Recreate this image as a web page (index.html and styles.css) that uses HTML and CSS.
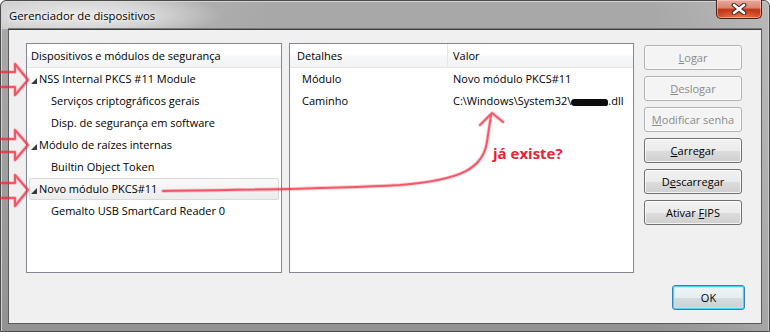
FILE: index.html
```html
<!DOCTYPE html>
<html lang="pt-BR">
<head>
<meta charset="utf-8">
<title>Gerenciador de dispositivos</title>
<link rel="stylesheet" href="styles.css">
</head>
<body>
<div class="window">
  <div class="titlebar">
    <span class="title">Gerenciador de dispositivos</span>
    <div class="close">
      <svg width="16" height="12" viewBox="0 0 16 12">
        <path d="M3,2 L13,10 M13,2 L3,10" stroke="#3a2620" stroke-width="4.6" stroke-linecap="round"/>
        <path d="M3,2 L13,10 M13,2 L3,10" stroke="#ffffff" stroke-width="2.6" stroke-linecap="round"/>
      </svg>
    </div>
  </div>
  <div class="client">
    <div class="main">
      <div class="pane tree">
        <div class="head">Dispositivos e módulos de segurança</div>
        <div class="row top"><span class="twisty"></span>NSS Internal PKCS #11 Module</div>
        <div class="row child">Serviços criptográficos gerais</div>
        <div class="row child">Disp. de segurança em software</div>
        <div class="row top"><span class="twisty"></span>Módulo de raízes internas</div>
        <div class="row child">Builtin Object Token</div>
        <div class="row top hot"><span class="twisty"></span>Novo módulo PKCS#11</div>
        <div class="row child">Gemalto USB SmartCard Reader 0</div>
      </div>
      <div class="pane details">
        <div class="dhead">
          <div class="hcell first">Detalhes</div>
          <div class="hcell">Valor</div>
        </div>
        <div class="drow">
          <div class="cell first">Módulo</div>
          <div class="cell">Novo módulo PKCS#11</div>
        </div>
        <div class="drow">
          <div class="cell first">Caminho</div>
          <div class="cell">C:\Windows\System32\<span class="blot"></span>.dll</div>
        </div>
      </div>
      <div class="buttons">
        <button class="btn" disabled><u>L</u>ogar</button>
        <button class="btn" disabled><u>D</u>eslogar</button>
        <button class="btn" disabled><u>M</u>odificar senha</button>
        <button class="btn"><u>C</u>arregar</button>
        <button class="btn">D<u>e</u>scarregar</button>
        <button class="btn">Ativar <u>F</u>IPS</button>
      </div>
    </div>
    <div class="footer">
      <button class="btn ok">OK</button>
    </div>
  </div>
  <svg class="annot" width="770" height="332" viewBox="0 0 770 332">
    <g fill="none" stroke="#f0283c" stroke-linejoin="round" stroke-linecap="round">
      <g stroke-width="3.8" opacity="0.22">
        <path d="M1,72 L15,72 L15,64 L28,80 L15,95 L15,87 L1,87"/>
        <path d="M1,139 L15,139 L15,130 L28,145 L15,160 L15,152 L1,152"/>
        <path d="M1,183 L15,183 L15,175 L28,190 L15,206 L15,198 L1,198"/>
        <path d="M163,191 C240,190 330,189 400,185 C462,180 483,168 487,142 L491,115"/>
        <path d="M480,125 L492,113 L503,122"/>
      </g>
      <g stroke-width="2" opacity="0.7">
        <path d="M1,72 L15,72 L15,64 L28,80 L15,95 L15,87 L1,87"/>
        <path d="M1,139 L15,139 L15,130 L28,145 L15,160 L15,152 L1,152"/>
        <path d="M1,183 L15,183 L15,175 L28,190 L15,206 L15,198 L1,198"/>
        <path d="M163,191 C240,190 330,189 400,185 C462,180 483,168 487,142 L491,115"/>
        <path d="M480,125 L492,113 L503,122"/>
      </g>
    </g>
  </svg>
  <div class="note">já existe?</div>
</div>
</body>
</html>
```

FILE: styles.css
```css
html, body {
  margin: 0;
  padding: 0;
  background: #ffffff;
}

body {
  font-family: "Open Sans", "Noto Sans", "DejaVu Sans", sans-serif;
  font-size: 11px;
  color: #000000;
}

.window {
  position: relative;
  width: 770px;
  height: 332px;
  box-sizing: border-box;
  padding: 0 7px 7px 7px;
  display: flex;
  flex-direction: column;
  background:
    linear-gradient(to right, rgba(255,255,255,0.0) 0, rgba(255,255,255,0.0) 85%, rgba(255,255,255,0.18) 100%),
    linear-gradient(to bottom, #a9a9a9 0, #a2a2a2 40%, #929292 100%);
  border: 1px solid #4a4a4a;
  border-radius: 6px 6px 0 0;
  box-shadow: inset 1px 1px 0 #d4d4d4, inset -1px 0 0 #c8c8c8;
}

.titlebar {
  height: 28px;
  margin: 0 -6px 0 -6px;
  padding: 0 6px;
  display: flex;
  justify-content: space-between;
  align-items: flex-start;
  background:
    radial-gradient(ellipse 140px 26px at 80px 14px, rgba(235,235,235,0.95) 0, rgba(225,225,225,0.7) 55%, rgba(200,200,200,0) 100%),
    linear-gradient(to right, rgba(210,210,210,0.6) 0, rgba(210,210,210,0) 35%);
  border-radius: 6px 6px 0 0;
}

.title {
  margin-top: 7px;
  margin-left: 1px;
  font-size: 11.3px;
  line-height: 15px;
  color: #000000;
  text-shadow: 0 0 6px #ffffff, 0 0 3px #ffffff;
}

.close {
  width: 46px;
  height: 19px;
  margin-top: -1px;
  box-sizing: border-box;
  display: flex;
  align-items: center;
  justify-content: center;
  border: 1px solid #4b2118;
  border-top: none;
  border-radius: 0 0 5px 5px;
  background:
    radial-gradient(ellipse 30px 8px at 50% 100%, rgba(255,140,90,0.8) 0, rgba(255,120,80,0) 100%),
    linear-gradient(to bottom, #e8aa9c 0, #d98270 45%, #c2391b 50%, #c63a1c 100%);
  box-shadow: inset 0 0 0 1px rgba(255,210,200,0.55);
}

.close svg {
  display: block;
}

.client {
  flex: 1;
  display: flex;
  flex-direction: column;
  background: #f0f0f0;
  border: 1px solid #5b5b5b;
  border-top: 1px solid #3e3e3e;
  box-shadow: 0 -1px 0 #7a7a7a;
  padding: 13px 0 0 17px;
}

.main {
  display: flex;
  align-items: flex-start;
  height: 230px;
}

.pane {
  box-sizing: border-box;
  height: 230px;
  background: #ffffff;
  border: 1px solid #828790;
}

.tree {
  width: 256px;
}

.details {
  width: 345px;
  margin-left: 7px;
}

.head,
.dhead {
  height: 24px;
  box-sizing: border-box;
  border-bottom: 1px solid #e5e5e5;
  background: linear-gradient(to bottom, #ffffff 0, #ffffff 45%, #f6f7f8 55%, #f3f4f5 100%);
  line-height: 20px;
  padding-top: 2px;
}

.head {
  padding-left: 4px;
}

.dhead {
  display: grid;
  grid-template-columns: 158px 1fr;
  padding-top: 0;
}

.hcell {
  padding: 2px 0 0 5px;
  line-height: 20px;
}

.hcell.first {
  padding-left: 7px;
  border-right: 1px solid #e3e6ea;
}

.row {
  height: 22px;
  box-sizing: border-box;
  margin: 0 2px;
  border: 1px solid transparent;
  border-radius: 2px;
  line-height: 20px;
  display: flex;
  align-items: center;
  white-space: nowrap;
}

.row.top {
  padding-left: 1px;
}

.row.child {
  padding-left: 21px;
}

.row.hot {
  border-color: #d9d9d9;
  background: linear-gradient(to bottom, #fafafa 0, #ececec 100%);
}

.twisty {
  width: 0;
  height: 0;
  margin: 4px 2px 0 0;
  border-right: 6px solid #3a3a3a;
  border-top: 6px solid transparent;
}

.drow {
  display: grid;
  grid-template-columns: 158px 1fr;
  height: 22px;
  line-height: 22px;
  white-space: nowrap;
}

.cell {
  padding-left: 5px;
}

.cell.first {
  padding-left: 12px;
}

.blot {
  display: inline-block;
  width: 37px;
  height: 7px;
  margin-bottom: -1px;
  background: #0c0c0c;
  border-radius: 4px 3px 3px 4px;
  vertical-align: baseline;
}

.buttons {
  margin-left: 10px;
  margin-top: 2px;
  display: flex;
  flex-direction: column;
  gap: 6px;
}

.btn {
  width: 98px;
  height: 25px;
  box-sizing: border-box;
  padding: 0;
  margin: 0;
  font-family: "Open Sans", "Noto Sans", "DejaVu Sans", sans-serif;
  font-size: 11px;
  color: #000000;
  border: 1px solid #707070;
  border-radius: 3px;
  background: linear-gradient(to bottom, #f2f2f2 0, #ebebeb 50%, #dddddd 51%, #cfcfcf 100%);
  box-shadow: inset 0 0 0 1px rgba(255,255,255,0.75);
  text-align: center;
  white-space: nowrap;
}

.btn:disabled {
  color: #8a8a8a;
  border-color: #adb2b5;
  background: #f4f4f4;
  box-shadow: inset 0 0 0 1px #fbfbfb;
}

.btn u {
  text-decoration: underline;
  text-underline-offset: 1px;
}

.footer {
  display: flex;
  justify-content: flex-end;
  margin-top: 12px;
  padding-right: 16px;
}

.btn.ok {
  width: 73px;
  border-color: #3c7fb1;
  box-shadow: inset 0 0 0 1px #48d3f8, inset 0 0 0 2px rgba(180,235,252,0.7);
  background: linear-gradient(to bottom, #eef5f8 0, #e6eef2 50%, #d6dde1 51%, #c9d1d5 100%);
}

.annot {
  position: absolute;
  left: -1px;
  top: -1px;
  pointer-events: none;
}

.note {
  position: absolute;
  left: 492px;
  top: 142px;
  font-family: "Open Sans", "Noto Sans", sans-serif;
  font-weight: 700;
  font-size: 15px;
  line-height: 20px;
  color: #ea2232;
}
```
